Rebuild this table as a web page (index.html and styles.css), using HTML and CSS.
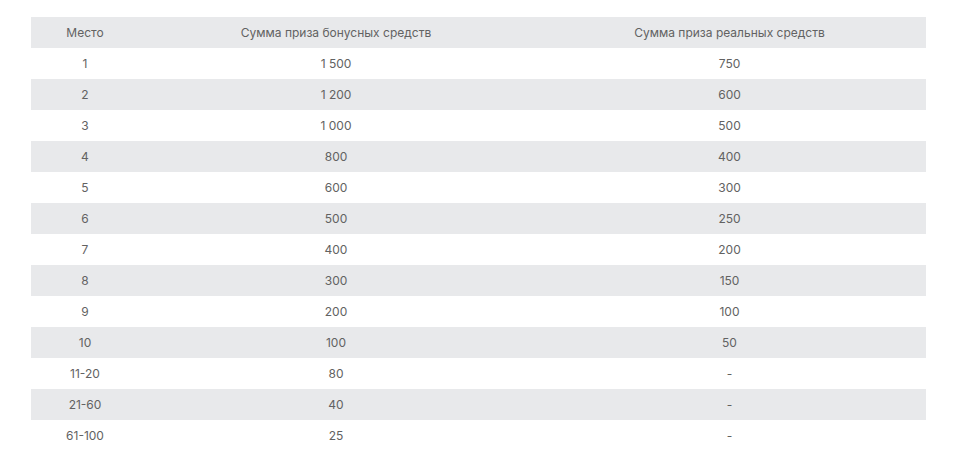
FILE: index.html
```html
<!DOCTYPE html>
<html lang="ru">
<head>
<meta charset="utf-8">
<title>Призы</title>
<link rel="stylesheet" href="styles.css">
</head>
<body>
<div class="wrap">
<table class="prizes">
<colgroup><col class="c1"><col class="c2"><col class="c3"></colgroup>
<thead>
<tr><th>Место</th><th>Сумма приза бонусных средств</th><th>Сумма приза реальных средств</th></tr>
</thead>
<tbody>
<tr><td>1</td><td>1&nbsp;500</td><td>750</td></tr>
<tr><td>2</td><td>1&nbsp;200</td><td>600</td></tr>
<tr><td>3</td><td>1&nbsp;000</td><td>500</td></tr>
<tr><td>4</td><td>800</td><td>400</td></tr>
<tr><td>5</td><td>600</td><td>300</td></tr>
<tr><td>6</td><td>500</td><td>250</td></tr>
<tr><td>7</td><td>400</td><td>200</td></tr>
<tr><td>8</td><td>300</td><td>150</td></tr>
<tr><td>9</td><td>200</td><td>100</td></tr>
<tr><td>10</td><td>100</td><td>50</td></tr>
<tr><td>11-20</td><td>80</td><td>-</td></tr>
<tr><td>21-60</td><td>40</td><td>-</td></tr>
<tr><td>61-100</td><td>25</td><td>-</td></tr>
</tbody>
</table>
</div>
</body>
</html>
```
FILE: styles.css
```css
html, body {
  margin: 0;
  padding: 0;
  background: #ffffff;
}
.wrap {
  padding: 17px 36px 0 31px;
}
.prizes {
  width: 895px;
  border-collapse: collapse;
  table-layout: fixed;
  font-family: Inter, "Noto Sans", sans-serif;
  font-size: 12px;
  color: #626262;
}
.c1 { width: 108px; }
.c2 { width: 394px; }
.c3 { width: 393px; }
.prizes th, .prizes td {
  height: 31px;
  padding: 0;
  text-align: center;
  vertical-align: middle;
  font-weight: 400;
}
.prizes thead tr,
.prizes tbody tr:nth-child(even) {
  background: #e8e9eb;
}
```
